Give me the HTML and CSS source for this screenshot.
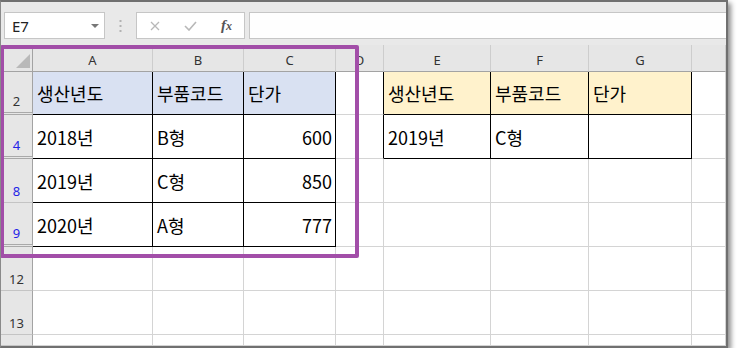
FILE: index.html
```html
<!DOCTYPE html>
<html lang="ko">
<head>
  <meta charset="UTF-8">
  <title>필터 결과</title>
  <link rel="stylesheet" href="styles.css">
</head>
<body>
  <div class="window">
    <div class="formula-bar">
      <div class="name-box">
        <span>E7</span>
        <span class="drop"></span>
      </div>
      <div class="grip">
        <svg width="3" height="12" viewBox="0 0 3 12"><rect x="0.5" y="0" width="2" height="2" fill="#b3b3b3"/><rect x="0.5" y="5" width="2" height="2" fill="#b3b3b3"/><rect x="0.5" y="10" width="2" height="2" fill="#b3b3b3"/></svg>
      </div>
      <div class="fx-buttons">
        <svg class="btn-x" width="10" height="10" viewBox="0 0 10 10"><path d="M1 1 L9 9 M9 1 L1 9" stroke="#b8b8b8" stroke-width="1.3" fill="none"/></svg>
        <svg class="btn-ok" width="13" height="10" viewBox="0 0 13 10"><path d="M1 5 L5 9 L12 1" stroke="#b8b8b8" stroke-width="1.6" fill="none"/></svg>
        <span class="fx"><i>f</i><i class="x">x</i></span>
      </div>
      <div class="formula-input"></div>
    </div>

    <div class="sheet">
      <div class="ch corner"><span class="tri"></span></div>
      <div class="ch">A</div>
      <div class="ch">B</div>
      <div class="ch">C</div>
      <div class="ch">D</div>
      <div class="ch">E</div>
      <div class="ch">F</div>
      <div class="ch">G</div>
      <div class="ch"></div>

      <div class="rh dbl">2</div>
      <div class="c tb blue">생산년도</div>
      <div class="c tb blue">부품코드</div>
      <div class="c tb blue">단가</div>
      <div class="c bl"></div>
      <div class="c tb yellow">생산년도</div>
      <div class="c tb yellow">부품코드</div>
      <div class="c tb yellow">단가</div>
      <div class="c"></div>

      <div class="rh dbl filt">4</div>
      <div class="c tb">2018년</div>
      <div class="c tb">B형</div>
      <div class="c tb num">600</div>
      <div class="c bl"></div>
      <div class="c tb">2019년</div>
      <div class="c tb">C형</div>
      <div class="c tb"></div>
      <div class="c"></div>

      <div class="rh filt">8</div>
      <div class="c tb">2019년</div>
      <div class="c tb">C형</div>
      <div class="c tb num">850</div>
      <div class="c"></div>
      <div class="c"></div>
      <div class="c"></div>
      <div class="c"></div>
      <div class="c"></div>

      <div class="rh dbl filt">9</div>
      <div class="c tb">2020년</div>
      <div class="c tb">A형</div>
      <div class="c tb num">777</div>
      <div class="c"></div>
      <div class="c"></div>
      <div class="c"></div>
      <div class="c"></div>
      <div class="c"></div>

      <div class="rh">12</div>
      <div class="c"></div>
      <div class="c"></div>
      <div class="c"></div>
      <div class="c"></div>
      <div class="c"></div>
      <div class="c"></div>
      <div class="c"></div>
      <div class="c"></div>

      <div class="rh">13</div>
      <div class="c"></div>
      <div class="c"></div>
      <div class="c"></div>
      <div class="c"></div>
      <div class="c"></div>
      <div class="c"></div>
      <div class="c"></div>
      <div class="c"></div>

      <div class="rh"></div>
      <div class="c"></div>
      <div class="c"></div>
      <div class="c"></div>
      <div class="c"></div>
      <div class="c"></div>
      <div class="c"></div>
      <div class="c"></div>
      <div class="c"></div>

      <div class="highlight"></div>
    </div>
  </div>
</body>
</html>
```

FILE: styles.css
```css
body {
  margin: 0;
  background-color: #fff;
  font-family: "Noto Sans", "Noto Sans CJK KR", sans-serif;
}

.window {
  width: 728px;
  height: 348px;
  box-sizing: border-box;
  border-top: 2px solid #707070;
  border-right: 2px solid #707070;
  border-bottom: 2px solid #707070;
  border-left: 1px solid #8a8a8a;
  box-shadow: 3px 3px 5px rgba(0, 0, 0, 0.45);
  background-color: #fff;
  overflow: hidden;
}

/* formula bar */
.formula-bar {
  display: flex;
  align-items: flex-start;
  height: 43px;
  box-sizing: border-box;
  padding: 10px 0 0 3px;
  background-color: #e9e9e9;
}

.name-box {
  width: 101px;
  height: 27px;
  box-sizing: border-box;
  border: 1px solid #c6c6c6;
  background-color: #fff;
  display: flex;
  align-items: center;
  justify-content: space-between;
  padding: 0 5px 0 7px;
  font-size: 15px;
  color: #222;
}

.drop {
  width: 0;
  height: 0;
  border-left: 4px solid transparent;
  border-right: 4px solid transparent;
  border-top: 4px solid #777;
}

.grip {
  width: 31px;
  height: 27px;
  display: flex;
  align-items: center;
  justify-content: center;
}

.fx-buttons {
  width: 109px;
  height: 27px;
  box-sizing: border-box;
  border: 1px solid #c6c6c6;
  background-color: #fff;
  display: flex;
  align-items: center;
  padding-left: 13px;
}

.btn-x {
  margin-right: 24px;
}

.btn-ok {
  margin-right: 24px;
}

.fx {
  font-family: "Liberation Serif", serif;
  font-size: 15px;
  font-weight: bold;
  color: #555;
}

.fx .x {
  font-size: 12px;
}

.formula-input {
  flex: 1;
  height: 27px;
  box-sizing: border-box;
  margin-left: 4px;
  border: 1px solid #c6c6c6;
  border-right: none;
  background-color: #fefefe;
}

/* sheet grid */
.sheet {
  position: relative;
  display: grid;
  grid-template-columns: 32px 120px 91px 92px 48px 107px 98px 103px 1fr;
  grid-template-rows: 27px 43px 44px 44px 44px 44px 44px 1fr;
  height: 301px;
}

.ch {
  background-color: #e6e6e6;
  border-bottom: 1px solid #a3a3a3;
  border-right: 1px solid #cdcdcd;
  display: flex;
  align-items: center;
  justify-content: center;
  padding-top: 3px;
  box-sizing: border-box;
  font-size: 13px;
  color: #333;
}

.corner {
  position: relative;
  border-right-color: #a3a3a3;
}

.tri {
  position: absolute;
  right: 2px;
  bottom: 3px;
  width: 14px;
  height: 14px;
  background-color: #b9b9b9;
  clip-path: polygon(100% 0, 100% 100%, 0 100%);
}

.rh {
  background-color: #e6e6e6;
  border-right: 1px solid #a3a3a3;
  border-bottom: 1px solid #c4c4c4;
  box-sizing: border-box;
  display: flex;
  align-items: flex-end;
  justify-content: center;
  padding-bottom: 3px;
  font-size: 13px;
  line-height: 15px;
  color: #333;
}

.rh.dbl {
  border-bottom: 3px double #a9a9a9;
}

.rh.filt {
  color: #2424e6;
}

.c {
  border-right: 1px solid #d4d4d4;
  border-bottom: 1px solid #d4d4d4;
  box-sizing: border-box;
  display: flex;
  align-items: center;
  padding: 0 3px 0 4px;
  font-family: "Noto Sans CJK KR", sans-serif;
  font-size: 18px;
  color: #000;
  white-space: nowrap;
}

.c.tb {
  border-right-color: #000;
  border-bottom-color: #000;
}

.c.bl {
  border-right-color: #000;
}

.c.num {
  justify-content: flex-end;
}

.blue {
  background-color: #d9e1f2;
}

.yellow {
  background-color: #fff2cc;
}

.highlight {
  position: absolute;
  left: -1px;
  top: 0;
  width: 359px;
  height: 213px;
  box-sizing: border-box;
  border: 4px solid #a24ea8;
  border-radius: 2px;
}
```
